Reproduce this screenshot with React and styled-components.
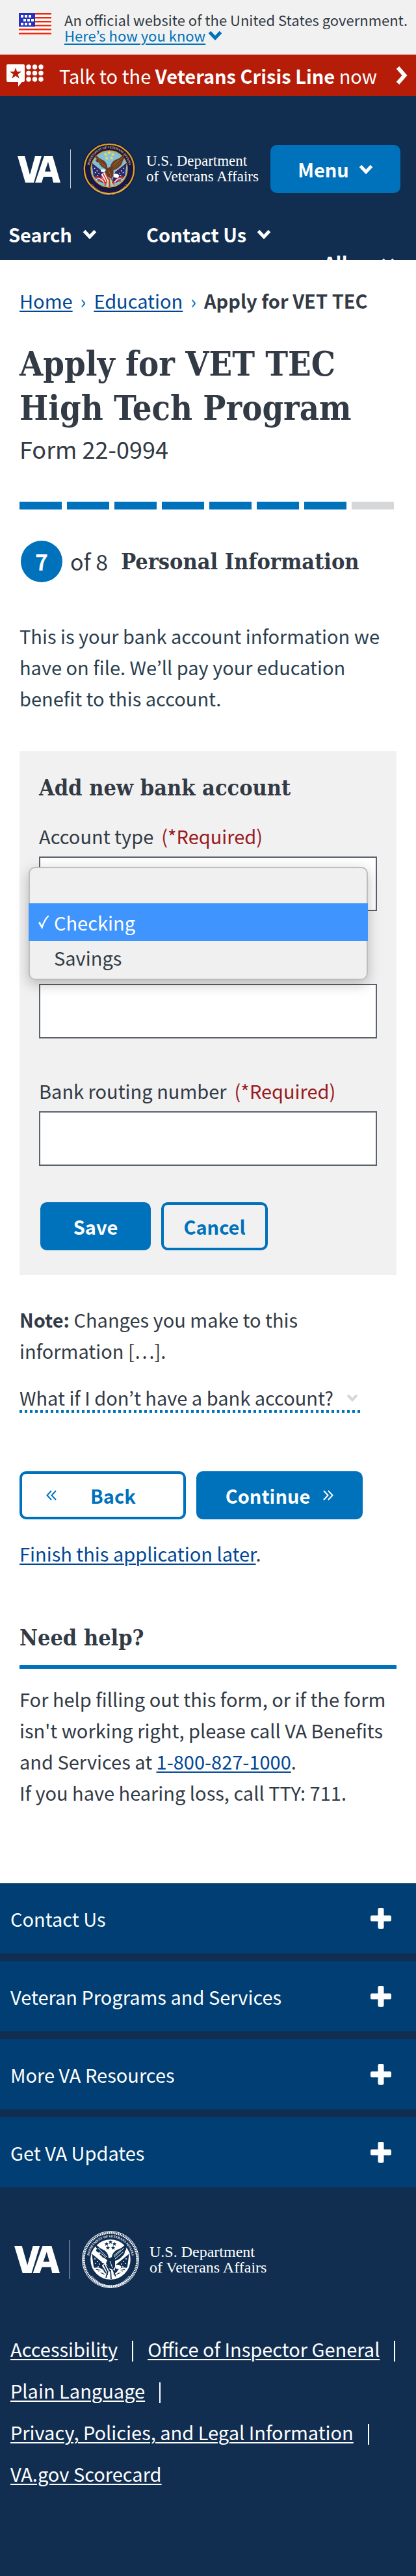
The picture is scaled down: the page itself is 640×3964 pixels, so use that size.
import React, { useState } from "react";
import styled, { createGlobalStyle, css } from "styled-components";

const sans = `"Noto Sans CJK KR", "Noto Sans", sans-serif`;
const slab = `"DejaVu Serif Condensed", "DejaVu Serif", serif`;
const serif = `"Liberation Serif", serif`;

const color = {
  ink: "#323a45",
  navy: "#112e51",
  footerRow: "#003e73",
  blue: "#0071bb",
  link: "#004795",
  gray: "#f1f1f1",
  field: "#5b616b",
  red: "#981b1e",
};

const GlobalStyle = createGlobalStyle`
  *, *::before, *::after { box-sizing: border-box; }
  body { margin: 0; background: #fff; color: ${color.ink}; font-family: ${sans}; font-size: 29px; line-height: 48px; }
  h1, h2, h3, p, ul, ol { margin: 0; padding: 0; }
  ul, ol { list-style: none; }
  button, input, select { font: inherit; }
  svg { display: block; flex: none; }
`;

const Page = styled.div`
  display: flex;
  flex-direction: column;
  min-height: 100vh;
  background: ${color.navy};
`;

const TextLink = styled.a`
  color: ${(p) => p.$tone || color.link};
  text-decoration: underline;
  text-decoration-thickness: 2px;
  text-underline-offset: 3px;
`;

/* Government banner */
const GovBanner = styled.div`
  display: flex;
  gap: 20px;
  padding: 18px 8px 18px 29px;
  background: ${color.gray};
  font-size: 22px;
  line-height: 24px;
`;
const GovLink = styled.div`
  display: flex;
  align-items: center;
  gap: 4px;
`;

/* Crisis line */
const CrisisBar = styled.a`
  display: flex;
  align-items: center;
  height: 64px;
  padding: 0 13px 0 10px;
  background: #b51d09;
  color: #fff;
  text-decoration: none;
`;
const CrisisText = styled.span`
  flex: 1;
  margin-left: 24px;
`;

/* Header */
const Header = styled.header`
  height: 252px;
  padding-top: 71px;
  overflow: hidden;
  background: ${color.navy};
  color: #fff;
`;
const HeaderTop = styled.div`
  display: flex;
  align-items: center;
  justify-content: space-between;
  padding: 0 24px 0 27px;
`;
const Brand = styled.a`
  display: flex;
  align-items: center;
  color: #fff;
  text-decoration: none;
`;
const BrandRule = styled.span`
  width: 1px;
  height: 60px;
  margin: 0 18px 0 15px;
  background: #c3cbd4;
`;
const BrandName = styled.span`
  margin-left: 16px;
  font-family: ${serif};
  font-size: ${(p) => p.$size}px;
  line-height: 24px;
`;
const HeaderNav = styled.nav`
  display: grid;
  grid-template-columns: 212px 1fr 142px;
  align-items: start;
  padding: 35px 0 0 13px;
`;
const NavButton = styled.button`
  display: flex;
  align-items: center;
  justify-self: start;
  gap: 16px;
  margin-top: ${(p) => (p.$dropped ? 44 : 0)}px;
  padding: 0;
  border: 0;
  background: none;
  color: #fff;
  font-weight: 700;
  line-height: 48px;
`;

/* Buttons */
const Button = styled.button`
  display: flex;
  align-items: center;
  justify-content: ${(p) => (p.$lead ? "flex-start" : "center")};
  gap: ${(p) => p.$gap || 0}px;
  width: ${(p) => p.$width}px;
  height: 74px;
  padding: 0 0 0 ${(p) => p.$lead || 0}px;
  border: 4px solid ${color.blue};
  border-radius: 10px;
  background: ${(p) => (p.$outline ? "transparent" : color.blue)};
  color: ${(p) => (p.$outline ? color.blue : "#fff")};
  font-weight: 700;
`;

/* Main content */
const Main = styled.main`
  padding: 38px 30px 116px;
  background: #fff;
`;
const Crumbs = styled.ol`
  display: flex;
  gap: 12px;
  white-space: nowrap;
`;
const Crumb = styled.li`
  display: flex;
  gap: 12px;
  font-weight: ${(p) => (p.$current ? 700 : 400)};
`;
const CrumbMark = styled.span`
  color: ${color.blue};
`;
const Title = styled.h1`
  margin-top: 40px;
  font: 700 52px/68px ${slab};
`;
const FormNumber = styled.p`
  font-size: 36px;
  line-height: 56px;
`;
const Progress = styled.div`
  display: flex;
  gap: 8px;
  margin-top: 54px;
  padding-right: 4px;
`;
const Segment = styled.span`
  flex: 1;
  height: 12px;
  background: ${(p) => (p.$done ? color.blue : "#d6d7d9")};
`;
const Step = styled.div`
  display: flex;
  align-items: center;
  margin: 48px 0 0 2px;
`;
const StepNumber = styled.span`
  display: grid;
  place-items: center;
  width: 64px;
  height: 64px;
  border-radius: 50%;
  background: ${color.blue};
  color: #fff;
  font-size: 34px;
  font-weight: 700;
`;
const StepTotal = styled.span`
  margin: 0 20px 0 12px;
  font-size: 34px;
`;
const SlabHeading = styled.h2`
  font: 700 34px/48px ${slab};
`;
const Paragraph = styled.p`
  margin-top: ${(p) => p.$top}px;
  color: ${(p) => p.$tone || color.ink};
`;

/* Bank account card */
const Card = styled.form`
  margin-top: 58px;
  padding: 32px 30px 38px;
  background: ${color.gray};
`;
const Field = styled.div`
  position: relative;
  margin-top: ${(p) => p.$top}px;
`;
const Label = styled.label`
  display: block;
  margin-bottom: 8px;
`;
const Required = styled.span`
  margin-left: 12px;
  color: ${color.red};
`;
const box = css`
  display: block;
  width: 100%;
  height: 84px;
  padding: 0 16px;
  border: 2px solid ${color.field};
  border-radius: 0;
  background: #fff;
  appearance: none;
`;
const Input = styled.input`${box}`;
const Select = styled.select`
  ${box}
  color: transparent;
`;
const Options = styled.ul`
  position: absolute;
  z-index: 1;
  top: 72px;
  left: -16px;
  right: 14px;
  padding: 6px 0 10px;
  border-radius: 10px;
  background: #f0f0f0;
  box-shadow: inset 0 0 0 2px #bdbdbd, 0 6px 20px rgba(0, 0, 0, 0.25);
`;
const Option = styled.li`
  display: flex;
  align-items: center;
  gap: 7px;
  height: ${(p) => (p.$active ? 58 : 50)}px;
  padding-left: 14px;
  background: ${(p) => (p.$active ? "#3f95fd" : "transparent")};
  color: ${(p) => (p.$active ? "#fff" : color.ink)};
`;
const CheckSlot = styled.span`
  width: 18px;
`;
const CardActions = styled.div`
  display: flex;
  gap: 16px;
  margin: 56px 0 0 2px;
`;

const Disclosure = styled.button`
  display: flex;
  align-items: center;
  gap: 20px;
  margin-top: 24px;
  padding: 0 5px 0 0;
  border: 0;
  background: repeating-linear-gradient(90deg, ${color.blue} 0 4px, transparent 4px 8px) bottom / 100% 4px no-repeat;
  color: ${color.ink};
`;
const FormNav = styled.div`
  display: flex;
  gap: 16px;
  margin-top: 90px;
`;
const HelpHeading = styled(SlabHeading)`
  margin-top: 82px;
  padding-bottom: 18px;
  border-bottom: 6px solid ${color.blue};
`;

/* Footer */
const FooterRows = styled.div`
  display: flex;
  flex-direction: column;
  gap: 12px;
`;
const FooterRow = styled.button`
  display: flex;
  align-items: center;
  justify-content: space-between;
  height: 108px;
  padding: 0 38px 0 16px;
  border: 0;
  background: ${color.footerRow};
  color: #fff;
`;
const FooterBrand = styled.div`
  padding: 67px 0 0 22px;
`;
const FooterLinks = styled.ul`
  display: flex;
  flex-wrap: wrap;
  padding: 61px 0 126px 16px;
  color: #fff;
  line-height: 64px;
`;
const FooterItem = styled.li`
  display: flex;
  align-items: center;
  &:not(:last-child)::after {
    content: "";
    width: 2px;
    height: 32px;
    margin: 8px 22px 0;
    background: #fff;
  }
`;

const Chevron = ({ w = 22, h = 16, tone = "currentColor", stroke = 5 }) => (
  <svg width={w} height={h} viewBox="0 0 22 16" aria-hidden="true">
    <path d="M2.500 3.500L11 12.500L19.500 3.500" fill="none" stroke={tone} strokeWidth={stroke} />
  </svg>
);

const Guillemet = ({ flip }) => (
  <svg width="16" height="18" viewBox="0 0 16 18" aria-hidden="true">
    <path
      d={flip ? "M8 2L1.500 9L8 16M15 2L8.500 9L15 16" : "M1 2L7.500 9L1 16M8 2L14.500 9L8 16"}
      fill="none"
      stroke="currentColor"
      strokeWidth="2"
    />
  </svg>
);

const FlagArt = styled.svg`
  margin-top: 2px;
`;
const Flag = () => (
  <FlagArt width="50" height="34" viewBox="0 0 50 34" aria-hidden="true">
    <rect width="50" height="34" fill="#fff" />
    {[0, 6, 12, 18, 24, 30.5].map((y) => (
      <rect key={y} y={y} width="50" height="2.5" fill="#f2270c" />
    ))}
    <rect width="25" height="21" fill="#2432bd" />
    {[[3, 3], [9, 3], [15, 3], [7, 9], [13, 9], [19, 9], [3, 15], [9, 15], [15, 15]].map(([x, y]) => (
      <rect key={`${x}-${y}`} x={x} y={y} width="4" height="4" fill="#fff" />
    ))}
  </FlagArt>
);

const CrisisIcon = () => (
  <svg width="57" height="36" viewBox="0 0 57 36" aria-hidden="true">
    <path d="M2 1H26Q28 1 28 3V26Q28 28 26 28H24L18 35V28H2Q0 28 0 26V3Q0 1 2 1Z" fill="#fff" />
    <path d="M14 6L16.200 12.300H23L17.600 16.300L19.600 22.800L14 18.800L8.400 22.800L10.400 16.300L5 12.300H11.800Z" fill="#b51d09" />
    {[5, 14.5, 24].map((y) => [34, 43.5, 53].map((x) => <circle key={`${x}-${y}`} cx={x} cy={y} r="3.700" fill="#fff" />))}
  </svg>
);

const VaMark = ({ w, h }) => (
  <svg width={w} height={h} viewBox="0 0 66 41" preserveAspectRatio="none" role="img" aria-label="VA">
    <path d="M0 0H11L19 29L27 0H37L25 41H12Z" fill="#fff" />
    <path fillRule="evenodd" d="M41 0H54L66 41H55L53 32H40L37 41H27ZM47 9L42 24H51Z" fill="#fff" />
  </svg>
);

const Seal = ({ size, mono, id }) => {
  const ring = mono ? color.navy : "#1b1745";
  const gold = mono ? "#fff" : "#d9a520";
  const sky = mono ? "#fff" : "#7fc0dc";
  const body = mono ? color.navy : "#6b3b1c";
  const wing = mono ? "#fff" : "#a2673a";
  const flagBlue = mono ? color.navy : "#2a2a6b";
  const stripe = mono ? color.navy : "#d8362c";
  return (
    <svg width={size} height={size} viewBox="0 0 88 88" aria-hidden="true">
      <defs>
        <path id={`${id}-top`} d="M11.400 48A33 33 0 1 1 76.600 48" />
        <path id={`${id}-bottom`} d="M7 50A37 37 0 0 0 81 50" />
      </defs>
      <circle cx="44" cy="44" r="43.500" fill={ring} stroke={mono ? "#fff" : ring} />
      <circle cx="44" cy="44" r="41" fill="none" stroke={gold} strokeWidth={mono ? 3 : 2.5} strokeDasharray={mono ? "1.800 1" : "none"} />
      <circle cx="44" cy="44" r="30" fill={sky} stroke={gold} strokeWidth="1.500" />
      <g fontFamily="Liberation Serif, serif" fontSize="5" fontWeight="700" textAnchor="middle" fill={mono ? "#fff" : "#e2c36a"}>
        <text><textPath href={`#${id}-top`} startOffset="50%">DEPARTMENT OF VETERANS AFFAIRS</textPath></text>
        <text><textPath href={`#${id}-bottom`} startOffset="50%">UNITED STATES OF AMERICA</textPath></text>
      </g>
      <path d="M15 33L34 48L40 68Q26 67 18 55ZM73 33L54 48L48 68Q62 67 70 55Z" fill={flagBlue} />
      {[[20, 43], [24, 47], [21, 50], [27, 51], [25, 55], [68, 43], [64, 47], [67, 50], [61, 51], [63, 55]].map(([x, y]) => (
        <circle key={`${x}-${y}`} cx={x} cy={y} r="0.900" fill="#fff" />
      ))}
      <path d="M20 58Q28 56 33 63M25 64Q32 61 38 68M68 58Q60 56 55 63M63 64Q56 61 50 68" fill="none" stroke={mono ? "#fff" : stripe} strokeWidth="2.500" />
      <path d="M22 61Q30 58 35 66M66 61Q58 58 53 66" fill="none" stroke="#fff" strokeWidth="1.500" />
      <path d="M15 33L36 50M73 33L52 50" stroke={mono ? "#fff" : "#d8c9a0"} strokeWidth={mono ? 3 : 1} />
      <path d="M41 42Q41 35 35 30Q27 27 20 19Q20 25 24 28Q21 28 22 31Q25 34 28 34Q26 37 30 38Q31 41 35 42L39 45L37 50L41 57L48 60L51 55L51 46Q58 44 61 40Q66 36 66 32Q70 27 68 19Q62 27 54 29Q47 33 46 40Q44 42 41 42Z" fill={body} />
      <path d="M25 26L38 40M26 32L37 41M65 26L50 40M64 32L51 43M60 29L49 38M43 46L47 57" stroke={wing} strokeWidth="1" />
      <path d="M30 46Q34 43 38 46L35 49L31 49ZM51 53Q57 50 61 55L58 59L52 58Z" fill="#fff" />
      <path d="M31 53Q34 49 39 52L44 63L38 66L32 60Z" fill="#fff" />
      <path d="M34 52L40 64M38 52L43 62M31 55L37 65M44 60L45 74M40 62L37 72M48 60L52 70" stroke={stripe} strokeWidth="1.800" />
      <path d="M42 63L41 74M47 63L49 72" stroke={mono ? "#fff" : "#f4d94b"} strokeWidth="1.500" />
      {[[44, 17], [38, 20], [50, 20], [40, 26], [48, 26]].map(([x, y]) => (
        <path key={`${x}-${y}`} d={`M${x} ${y - 3}l1 2h2l-1.500 1.500l.5 2.500l-2-1.500l-2 1.500l.5-2.500l-1.500-1.500h2Z`} fill={mono ? color.navy : "#f4d94b"} />
      ))}
    </svg>
  );
};

const Plus = () => (
  <svg width="32" height="32" viewBox="0 0 32 32" aria-hidden="true">
    <rect x="11.500" width="9" height="32" rx="2" fill="#fff" />
    <rect y="11.500" width="32" height="9" rx="2" fill="#fff" />
  </svg>
);

const footerRows = ["Contact Us", "Veteran Programs and Services", "More VA Resources", "Get VA Updates"];
const footerLinks = [
  "Accessibility",
  "Office of Inspector General",
  "Plain Language",
  "Privacy, Policies, and Legal Information",
  "VA.gov Scorecard",
];

export default function App() {
  const [account, setAccount] = useState("Checking");
  return (
    <Page>
      <GlobalStyle />
      <GovBanner>
        <Flag />
        <div>
          An official website of the United States government.
          <GovLink>
            <TextLink href="#about" $tone={color.blue}>Here’s how you know</TextLink>
            <Chevron tone={color.blue} />
          </GovLink>
        </div>
      </GovBanner>
      <CrisisBar href="#crisis">
        <CrisisIcon />
        <CrisisText>Talk to the <strong>Veterans Crisis Line</strong> now</CrisisText>
        <svg width="18" height="28" viewBox="0 0 18 28" aria-hidden="true">
          <path d="M3 2L13.500 14L3 26" fill="none" stroke="#fff" strokeWidth="6" />
        </svg>
      </CrisisBar>
      <Header>
        <HeaderTop>
          <Brand href="#home">
            <VaMark w={66} h={41} />
            <BrandRule />
            <Seal size={82} id="header-seal" />
            <BrandName $size={23}>U.S. Department<br />of Veterans Affairs</BrandName>
          </Brand>
          <Button type="button" $width={200} $gap={15}>Menu <Chevron /></Button>
        </HeaderTop>
        <HeaderNav>
          <NavButton type="button">Search <Chevron /></NavButton>
          <NavButton type="button">Contact Us <Chevron /></NavButton>
          <NavButton type="button" $dropped>Allen <Chevron /></NavButton>
        </HeaderNav>
      </Header>

      <Main>
        <nav aria-label="Breadcrumb">
          <Crumbs>
            <Crumb><TextLink href="#home">Home</TextLink><CrumbMark>›</CrumbMark></Crumb>
            <Crumb><TextLink href="#education">Education</TextLink><CrumbMark>›</CrumbMark></Crumb>
            <Crumb $current>Apply for VET TEC</Crumb>
          </Crumbs>
        </nav>
        <Title>Apply for VET TEC<br />High Tech Program</Title>
        <FormNumber>Form 22-0994</FormNumber>
        <Progress>
          {[1, 2, 3, 4, 5, 6, 7, 8].map((n) => <Segment key={n} $done={n < 8} />)}
        </Progress>
        <Step>
          <StepNumber>7</StepNumber>
          <StepTotal>of 8</StepTotal>
          <SlabHeading>Personal Information</SlabHeading>
        </Step>
        <Paragraph $top={58} $tone="#2b3f50">
          This is your bank account information we have on file. We’ll pay your education benefit to this account.
        </Paragraph>

        <Card onSubmit={(e) => e.preventDefault()}>
          <SlabHeading as="h3">Add new bank account</SlabHeading>
          <Field $top={26}>
            <Label htmlFor="account-type">Account type<Required>(*Required)</Required></Label>
            <Select id="account-type" value={account} onChange={(e) => setAccount(e.target.value)}>
              <option value=""></option>
              <option value="Checking" label=" " />
              <option value="Savings" label=" " />
            </Select>
            <Options aria-hidden="true">
              {["", "Checking", "Savings"].map((name) => (
                <Option key={name} $active={name === account} onClick={() => setAccount(name)}>
                  <CheckSlot>
                    {name === account && (
                      <svg width="18" height="24" viewBox="0 0 18 24">
                        <path d="M1 13L3.500 11.500L6.500 17Q10 7 15.500 2H18Q10 11 7 23Z" fill="#fff" />
                      </svg>
                    )}
                  </CheckSlot>
                  {name}
                </Option>
              ))}
            </Options>
          </Field>
          <Field $top={112}>
            <Input aria-label="Bank account number" />
          </Field>
          <Field $top={56}>
            <Label htmlFor="routing">Bank routing number<Required>(*Required)</Required></Label>
            <Input id="routing" />
          </Field>
          <CardActions>
            <Button $width={170}>Save</Button>
            <Button type="button" $outline $width={164}>Cancel</Button>
          </CardActions>
        </Card>

        <Paragraph $top={44}><strong>Note:</strong> Changes you make to this<br />information […].</Paragraph>
        <Disclosure type="button">What if I don’t have a bank account? <Chevron w={18} h={13} tone="#d6d7d9" /></Disclosure>
        <FormNav>
          <Button type="button" $outline $width={256} $lead={37} $gap={52}><Guillemet flip />Back</Button>
          <Button type="button" $width={256} $gap={20}>Continue<Guillemet /></Button>
        </FormNav>
        <Paragraph $top={28}><TextLink href="#later">Finish this application later</TextLink>.</Paragraph>

        <HelpHeading>Need help?</HelpHeading>
        <Paragraph $top={22}>
          For help filling out this form, or if the form isn't working right, please call VA Benefits and Services at{" "}
          <TextLink href="tel:18008271000">1-800-827-1000</TextLink>.<br />
          If you have hearing loss, call TTY: 711.
        </Paragraph>
      </Main>

      <footer>
        <FooterRows>
          {footerRows.map((name) => <FooterRow key={name} type="button">{name}<Plus /></FooterRow>)}
        </FooterRows>
        <FooterBrand>
          <Brand href="#home">
            <VaMark w={70} h={42} />
            <BrandRule />
            <Seal size={88} mono id="footer-seal" />
            <BrandName $size={24}>U.S. Department<br />of Veterans Affairs</BrandName>
          </Brand>
        </FooterBrand>
        <FooterLinks>
          {footerLinks.map((name) => (
            <FooterItem key={name}><TextLink href="#footer" $tone="#fff">{name}</TextLink></FooterItem>
          ))}
        </FooterLinks>
      </footer>
    </Page>
  );
}
